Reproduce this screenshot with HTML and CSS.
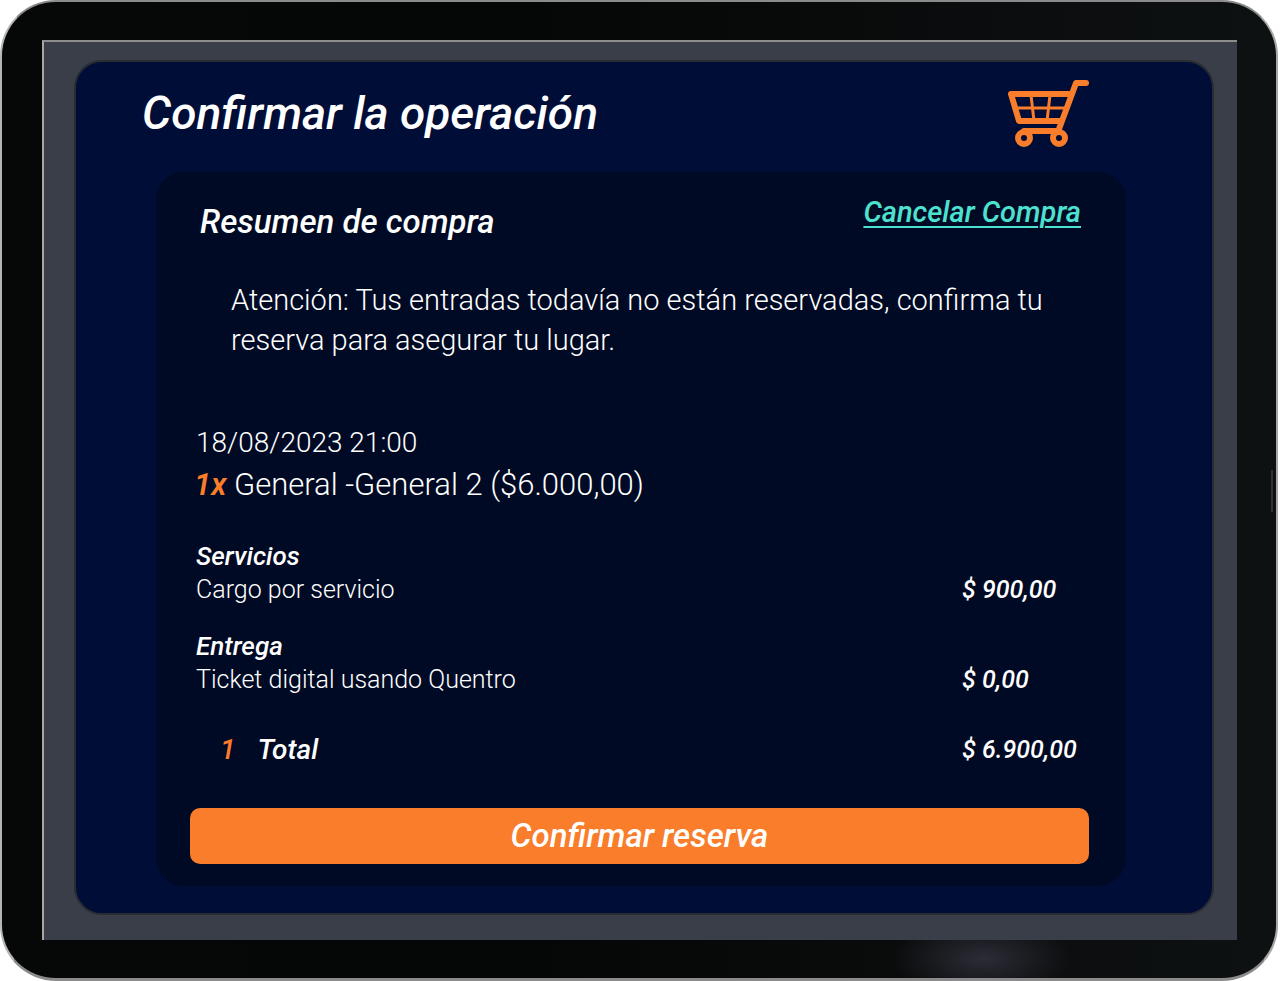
FILE: index.html
```html
<!DOCTYPE html>
<html lang="es">
<head>
<meta charset="utf-8">
<meta name="viewport" content="width=device-width, initial-scale=1">
<title>Confirmar la operación</title>
<link rel="stylesheet" href="styles.css">
</head>
<body>
<div class="device">
  <div class="screen">
    <main class="card">
      <header class="card-header">
        <h1 class="title">Confirmar la operación</h1>
        <svg class="cart" viewBox="0 0 84 68" role="img" aria-label="Carrito">
          <g fill="none" stroke="#f97d2b" stroke-linecap="round" stroke-linejoin="round">
            <path stroke-width="6" d="M78 4H68L64 15 51 50M62 15H3L11 42H53"/>
            <path stroke-width="3" d="M6 29H58M23 16L26 42M42 16L39 42"/>
            <path stroke-width="6" d="M16 52H50"/>
            <circle stroke-width="6" cx="16" cy="59" r="6"/>
            <circle stroke-width="6" cx="51" cy="59" r="6"/>
          </g>
        </svg>
      </header>
      <section class="panel">
        <div class="panel-header">
          <h2 class="subtitle">Resumen de compra</h2>
          <a class="cancel" href="#">Cancelar Compra</a>
        </div>
        <p class="notice">Atención: Tus entradas todavía no están reservadas, confirma tu reserva para asegurar tu lugar.</p>
        <div class="event">
          <p class="date">18/08/2023 21:00</p>
          <p class="ticket"><span class="quantity">1x</span> General -General 2 ($6.000,00)</p>
        </div>
        <div class="charge">
          <h3 class="charge-title">Servicios</h3>
          <div class="row"><span class="detail">Cargo por servicio</span><span class="price">$ 900,00</span></div>
        </div>
        <div class="charge">
          <h3 class="charge-title">Entrega</h3>
          <div class="row"><span class="detail">Ticket digital usando Quentro</span><span class="price">$ 0,00</span></div>
        </div>
        <div class="row total">
          <span class="total-label"><span class="count">1</span>Total</span><span class="price">$ 6.900,00</span>
        </div>
        <button class="confirm" type="button">Confirmar reserva</button>
      </section>
    </main>
  </div>
</div>
</body>
</html>
```
FILE: styles.css
```css
* { box-sizing: border-box; }

body {
  margin: 0;
  background: #fff;
  color: #fff;
  font-family: Roboto, "Liberation Sans", sans-serif;
}

h1, h2, h3, p { margin: 0; font-weight: 500; }

.device {
  display: flex;
  min-height: 100vh;
  margin-right: 2px;
  padding: 38px 39px 38px 40px;
  border: 2px solid #8b8b8b;
  border-left-color: #b5b5b5;
  border-right-color: #a5a5a5;
  border-bottom-width: 3px;
  border-radius: 56px;
  background:
    linear-gradient(#303234, #303234) right 3px top 468px / 2px 42px no-repeat,
    radial-gradient(ellipse 90px 40px at 77% 98%, #2b2c36, transparent) no-repeat,
    linear-gradient(90deg, #060808, #050606 40%, #0e1112);
}

.screen {
  flex: 1;
  display: flex;
  padding: 18px 23px 25px 30px;
  border-top: 2px solid #8d8d8d;
  border-left: 2px solid #aaa5a0;
  background: #393e48;
}

.card {
  flex: 1;
  padding: 16px 86px 26px 80px;
  border: 2px solid #292d33;
  border-radius: 28px;
  background: #000d37;
}

.card-header {
  display: flex;
  justify-content: space-between;
  align-items: center;
  padding: 0 34px 24px 0;
}

.title {
  margin-left: -14px;
  font-size: 46px;
  font-style: italic;
  line-height: 70px;
}

.cart { width: 84px; height: 68px; }

.panel {
  padding: 22px 37px 22px 34px;
  border-radius: 28px;
  background: #000a24;
}

.panel-header {
  display: flex;
  justify-content: space-between;
  align-items: flex-start;
  padding: 0 8px 28px 10px;
}

.subtitle {
  padding-top: 6px;
  font-size: 33px;
  font-style: italic;
  line-height: 44px;
}

.cancel {
  color: #4de2d0;
  font-size: 29px;
  font-style: italic;
  font-weight: 500;
  line-height: 36px;
  text-decoration-thickness: 2px;
  text-underline-offset: 4px;
}

.notice {
  padding: 8px 20px 64px 41px;
  font-size: 29px;
  font-weight: 300;
  line-height: 40px;
}

.event { padding: 0 0 31px 4px; }

.date {
  padding-left: 2px;
  font-size: 28px;
  font-weight: 300;
  line-height: 38px;
}

.ticket {
  font-size: 31px;
  font-weight: 300;
  line-height: 46px;
}

.quantity, .count {
  color: #f97d2b;
  font-style: italic;
  font-weight: 600;
}

.charge { padding: 0 0 22px 6px; }

.charge-title {
  font-size: 26px;
  font-style: italic;
  line-height: 34px;
}

.row {
  display: grid;
  grid-template-columns: 1fr 127px;
  line-height: 34px;
}

.detail { font-size: 25px; font-weight: 300; }

.price {
  font-size: 25px;
  font-style: italic;
  font-weight: 500;
}

.total { padding: 14px 0 41px 30px; }

.total-label {
  display: flex;
  gap: 22px;
  font-size: 28px;
  font-style: italic;
  font-weight: 500;
}

.count { font-weight: 500; }

.confirm {
  display: block;
  width: 100%;
  padding: 0;
  border: 0;
  border-radius: 10px;
  background: #f97d2b;
  color: #fff;
  font: italic 500 33px/56px Roboto, "Liberation Sans", sans-serif;
  cursor: pointer;
}
```
